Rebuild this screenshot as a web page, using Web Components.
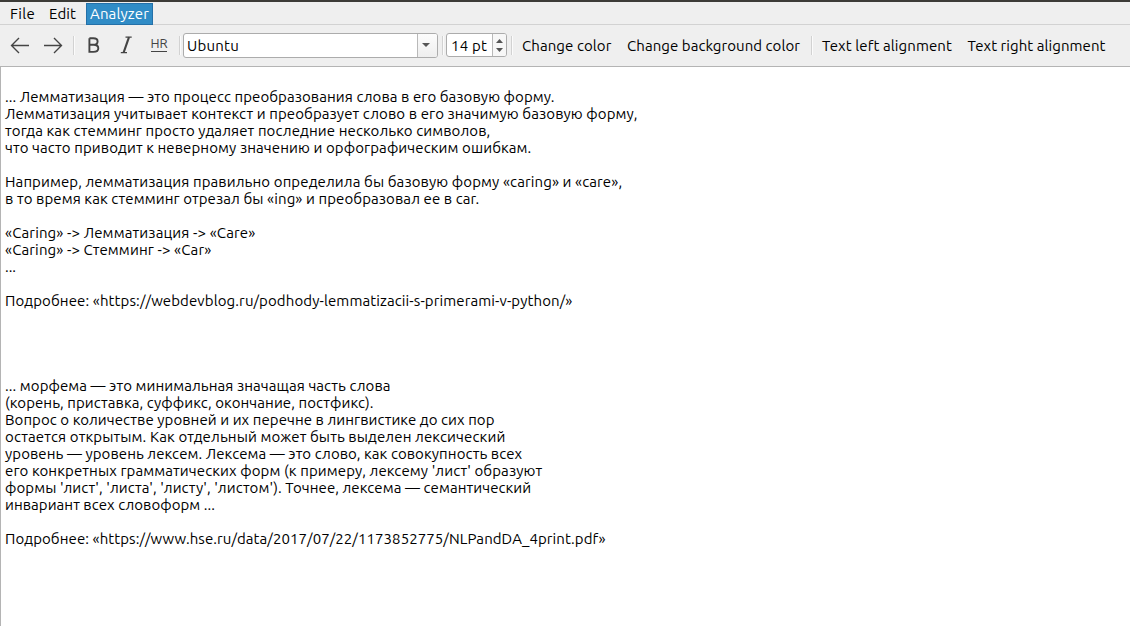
<!DOCTYPE html>
<html lang="ru">
<head>
<meta charset="utf-8">
<title>Analyzer</title>
<style>
html,body{margin:0;height:100%;overflow:hidden;background:#fff}
body{font:15px/17px "Ubuntu","Noto Sans",sans-serif;color:#000}
</style>
</head>
<body>
<editor-window></editor-window>
<script>
const define = (name, html, after) => customElements.define(name, class extends HTMLElement {
  connectedCallback() {
    if (this.shadowRoot) return;
    const t = document.createElement('template');
    t.innerHTML = html;
    this.attachShadow({mode: 'open'}).append(t.content.cloneNode(true));
    if (after) after(this, this.shadowRoot);
  }
});

// One line of text, tracked so that it takes the width in its "w" attribute.
define('text-run', `<style>
:host{display:block;white-space:pre;flex:none}
span{display:inline-block;white-space:pre}
</style><span><slot></slot></span>`, (el, root) => {
  const w = +el.getAttribute('w');
  if (!w) return;
  const span = root.querySelector('span');
  const n = [...el.textContent].length;
  const natural = span.getBoundingClientRect().width;
  const extra = (w - natural) / n;
  if (Math.abs(extra) > 0.005) span.style.letterSpacing = extra.toFixed(4) + 'px';
  el.style.width = w + 'px';
});

define('menu-item', `<style>
:host{display:block;box-sizing:border-box;height:22px;padding:1px 3px 0;border:1px solid transparent;line-height:17px}
:host([active]){background:#308cc6;border-color:#2470a8;color:#fff}
</style><slot></slot>`);

define('menu-bar', `<style>
:host{display:flex;box-sizing:border-box;height:25px;padding:1px 0 0 6px;background:#efefef;border-top:2px solid #3c3b37;border-bottom:1px solid #d2d2d2}
</style>
<menu-item><text-run w="25">File</text-run></menu-item>
<menu-item style="margin-left:6px"><text-run w="27">Edit</text-run></menu-item>
<menu-item active style="margin-left:6px"><text-run w="59">Analyzer</text-run></menu-item>`);

define('tool-separator', `<style>
:host{display:block;flex:none;width:1px;height:19px;background:#d2d2d2;border-right:1px solid #fbfbfb}
</style>`);

define('tool-icon', `<style>
:host{display:block;flex:none;width:22px;height:22px}
svg{display:block;overflow:visible;fill:none;stroke:#444;stroke-width:1.35}
.hr{position:relative;width:22px;height:22px;font:13px/15px "Ubuntu","Noto Sans",sans-serif;color:#444;display:flex;justify-content:center;padding-top:2px;box-sizing:border-box}
.hr::after{content:"";position:absolute;left:3px;right:3px;bottom:4px;height:1px;background:#444}
</style><div id="box"></div>`, (el, root) => {
  const art = {
    back: '<path d="M21 11.5H4M11 4 3.5 11.5 11 19"/>',
    forward: '<path d="M2 11.5h17M12 4l7.5 7.5L12 19"/>',
    bold: '<path stroke-width="1.9" d="M7.4 4.2h3.9c3 0 4.3 1.2 4.3 3.2s-1.4 3.3-4.1 3.3H7.4m0 0h4.2c3.1 0 4.7 1.2 4.7 3.5s-1.6 3.7-4.9 3.7H7.4zV4.2v13.7"/>',
    italic: '<path stroke-width="1.1" d="M10.5 3.1h6.2M5.8 18.6H12"/><path stroke-width="2.1" d="M14 3.1 8.6 18.6"/>'
  };
  const k = el.getAttribute('name');
  root.getElementById('box').innerHTML = k === 'hr'
    ? '<div class="hr"><text-run w="17">HR</text-run></div>'
    : `<svg width="22" height="22" viewBox="0 0 22 22">${art[k]}</svg>`;
});

define('font-combo', `<style>
:host{display:flex;flex:none;box-sizing:border-box;width:255px;height:25px;border:1px solid #acacac;border-radius:3px;background:#fff;overflow:hidden}
.value{flex:1;padding:3px 0 0 3px}
.drop{width:19px;border-left:1px solid #b9b9b9;background:linear-gradient(#fcfcfc,#eee);display:flex;align-items:center;justify-content:center}
svg{margin-right:3px}
</style>
<div class="value"><slot></slot></div>
<div class="drop"><svg width="8" height="4" viewBox="0 0 8 4"><path fill="#555" d="M0 0h8L4 4z"/></svg></div>`);

define('size-spin', `<style>
:host{display:flex;flex:none;box-sizing:border-box;width:61px;height:24px;border:1px solid #acacac;border-radius:3px;background:#fff;overflow:hidden}
.value{flex:1;padding:3px 0 0 4px}
.steps{width:13px;border-left:1px solid #b9b9b9;background:#f7f7f7;display:flex;flex-direction:column;align-items:center;justify-content:center;gap:5px}
svg{display:block}
</style>
<div class="value"><slot></slot></div>
<div class="steps"><svg width="7" height="4" viewBox="0 0 7 4"><path fill="#555" d="M0 4h7L3.5 0z"/></svg><svg width="7" height="4" viewBox="0 0 7 4"><path fill="#555" d="M0 0h7L3.5 4z"/></svg></div>`);

define('tool-bar', `<style>
:host{display:flex;align-items:center;box-sizing:border-box;height:42px;padding:0 0 1px 8px;background:#efefef;border-bottom:1px solid #b4b4b4}
</style>
<tool-icon name="back"></tool-icon>
<tool-icon name="forward" style="margin-left:12px"></tool-icon>
<tool-separator style="margin-left:9px"></tool-separator>
<tool-icon name="bold" style="margin-left:7px"></tool-icon>
<tool-icon name="italic" style="margin-left:11px"></tool-icon>
<tool-icon name="hr" style="margin-left:11px"></tool-icon>
<tool-separator style="margin-left:9px"></tool-separator>
<font-combo style="margin-left:2px"><text-run w="52">Ubuntu</text-run></font-combo>
<tool-separator style="margin-left:4px"></tool-separator>
<size-spin style="margin-left:2px"><text-run w="36">14 pt</text-run></size-spin>
<tool-separator style="margin-left:4px"></tool-separator>
<text-run style="margin-left:9px" w="89.5">Change color</text-run>
<text-run style="margin-left:15.5px" w="173">Change background color</text-run>
<tool-separator style="margin-left:11px"></tool-separator>
<text-run style="margin-left:9px" w="130">Text left alignment</text-run>
<text-run style="margin-left:15.5px" w="138">Text right alignment</text-run>`);

define('text-editor', `<style>
:host{display:block;flex:1;box-sizing:border-box;padding:21px 0 0 4px;background:#fff;border-left:1px solid #b4b4b4}
text-run{height:17px}
.gap{height:17px}
.section{height:68px}
</style>
<text-run w="549.6">... Лемматизация — это процесс преобразования слова в его базовую форму.</text-run>
<text-run w="632.5">Лемматизация учитывает контекст и преобразует слово в его значимую базовую форму,</text-run>
<text-run w="485.4">тогда как стемминг просто удаляет последние несколько символов,</text-run>
<text-run w="526.4">что часто приводит к неверному значению и орфографическим ошибкам.</text-run>
<div class="gap"></div>
<text-run w="617.2">Например, лемматизация правильно определила бы базовую форму «caring» и «care»,</text-run>
<text-run w="474.4">в то время как стемминг отрезал бы «ing» и преобразовал ее в car.</text-run>
<div class="gap"></div>
<text-run w="250.4">«Caring» -&gt; Лемматизация -&gt; «Care»</text-run>
<text-run w="206.4">«Caring» -&gt; Стемминг -&gt; «Car»</text-run>
<text-run w="11">...</text-run>
<div class="gap"></div>
<text-run w="567.5">Подробнее: «https://webdevblog.ru/podhody-lemmatizacii-s-primerami-v-python/»</text-run>
<div class="section"></div>
<text-run w="385.6">... морфема — это минимальная значащая часть слова</text-run>
<text-run w="368.6">(корень, приставка, суффикс, окончание, постфикс).</text-run>
<text-run w="489.5">Вопрос о количестве уровней и их перечне в лингвистике до сих пор</text-run>
<text-run w="500.4">остается открытым. Как отдельный может быть выделен лексический</text-run>
<text-run w="517.2">уровень — уровень лексем. Лексема — это слово, как совокупность всех</text-run>
<text-run w="537.3">его конкретных грамматических форм (к примеру, лексему 'лист' образуют</text-run>
<text-run w="526.3">формы 'лист', 'листа', 'листу', 'листом'). Точнее, лексема — семантический</text-run>
<text-run w="210">инвариант всех словоформ ...</text-run>
<div class="gap"></div>
<text-run w="600.6">Подробнее: «https://www.hse.ru/data/2017/07/22/1173852775/NLPandDA_4print.pdf»</text-run>`);

define('editor-window', `<style>
:host{display:flex;flex-direction:column;height:100vh}
menu-bar,tool-bar{flex:none}
</style>
<menu-bar></menu-bar><tool-bar></tool-bar><text-editor></text-editor>`);
</script>
</body>
</html>
